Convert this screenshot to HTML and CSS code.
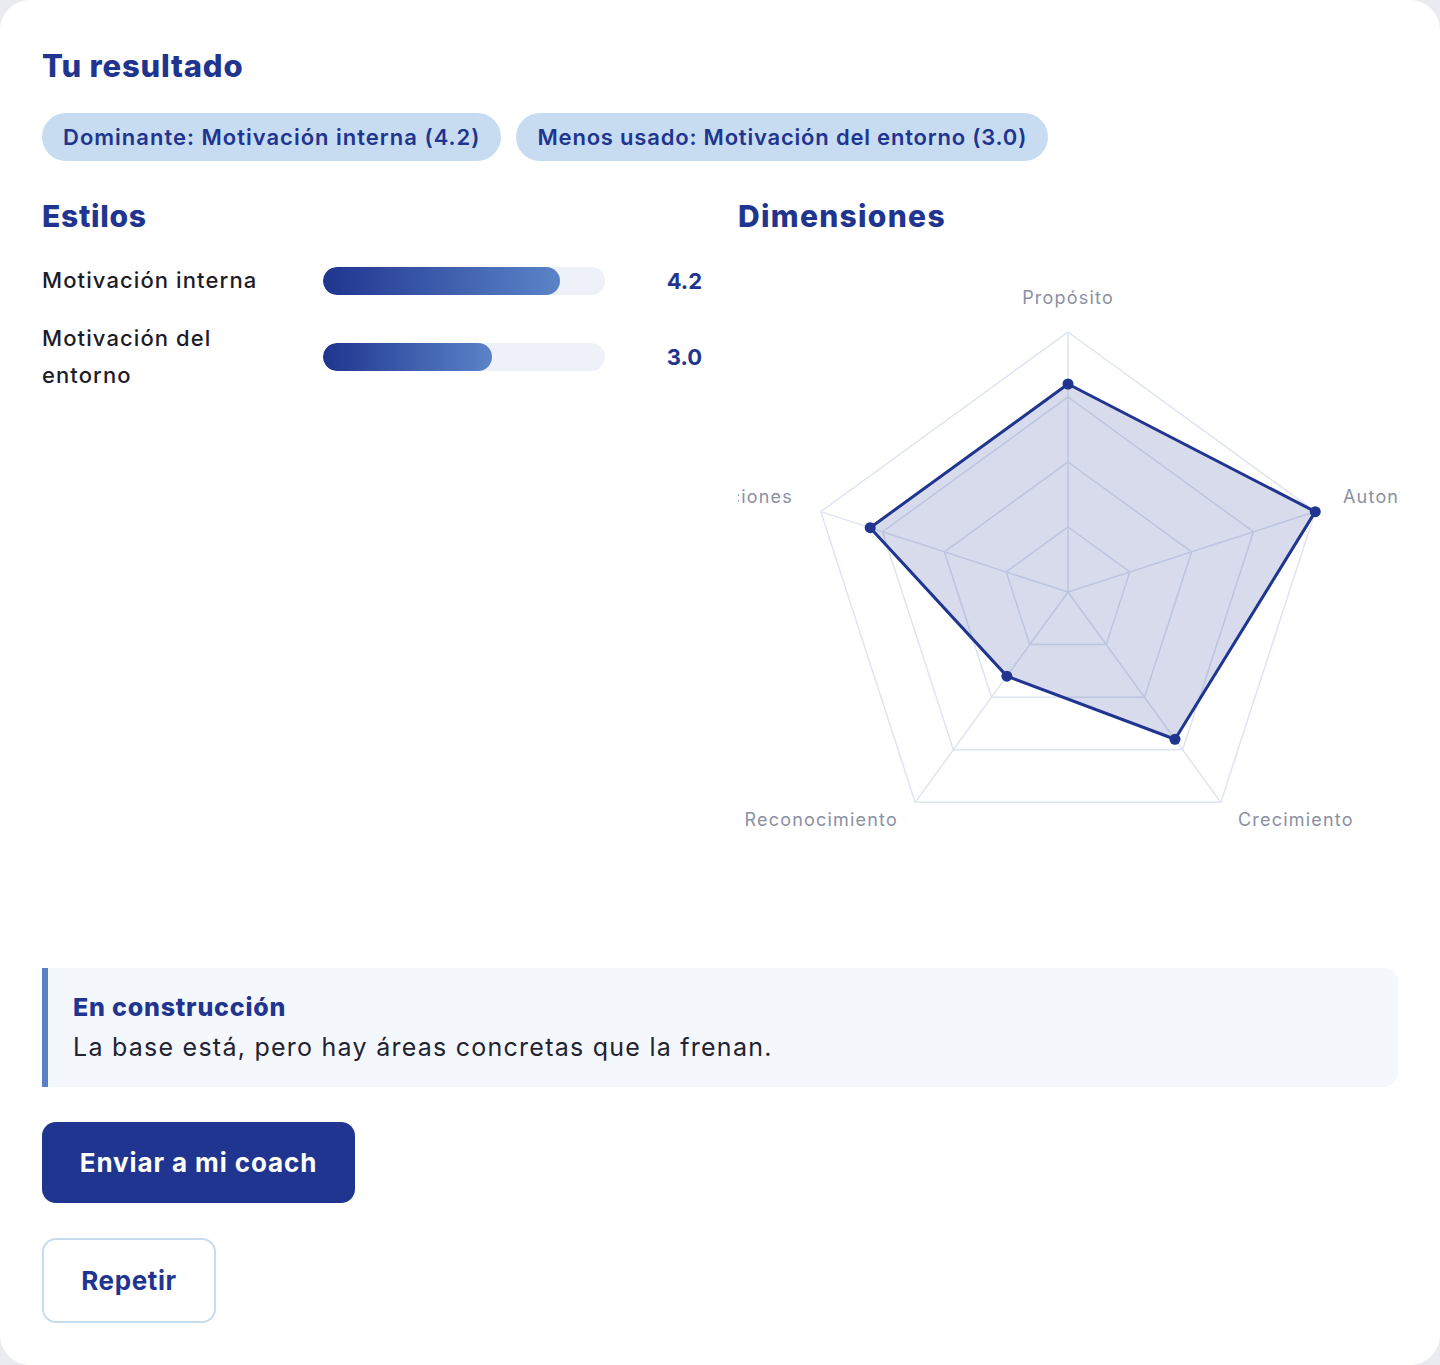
FILE: index.html
```html
<!DOCTYPE html>
<html lang="es">
<head>
<meta charset="utf-8">
<title>Tu resultado</title>
<link rel="stylesheet" href="styles.css">
</head>
<body>
<main class="card">
  <h1 class="title">Tu resultado</h1>
  <div class="pills">
    <span class="pill pill-dominant">Dominante: Motivación interna (4.2)</span>
    <span class="pill pill-least">Menos usado: Motivación del entorno (3.0)</span>
  </div>
  <div class="columns">
    <section class="col">
      <h2 class="heading">Estilos</h2>
      <div class="rows">
        <div class="row">
          <div class="row-label">Motivación interna</div>
          <div class="track"><div class="fill" style="width:84%"></div></div>
          <div class="row-value">4.2</div>
        </div>
        <div class="row">
          <div class="row-label">Motivación del entorno</div>
          <div class="track"><div class="fill" style="width:60%"></div></div>
          <div class="row-value">3.0</div>
        </div>
      </div>
    </section>
    <section class="col">
      <h2 class="heading heading-wide">Dimensiones</h2>
      <svg class="radar" width="660" height="680" viewBox="0 0 660 680">
        <g class="grid">
          <polygon points="330,80 577.27,259.66 482.82,550.34 177.18,550.34 82.73,259.66"/>
          <polygon points="330,145 515.46,279.74 444.62,497.76 215.38,497.76 144.54,279.74"/>
          <polygon points="330,210 453.64,299.83 406.41,445.17 253.59,445.17 206.36,299.83"/>
          <polygon points="330,275 391.82,319.91 368.21,392.59 291.79,392.59 268.18,319.91"/>
          <line x1="330" y1="340" x2="330" y2="80"/>
          <line x1="330" y1="340" x2="577.27" y2="259.66"/>
          <line x1="330" y1="340" x2="482.82" y2="550.34"/>
          <line x1="330" y1="340" x2="177.18" y2="550.34"/>
          <line x1="330" y1="340" x2="82.73" y2="259.66"/>
        </g>
        <polygon class="area" points="330,132 577.27,259.66 436.98,487.24 268.87,424.14 132.18,275.72"/>
        <g class="dots">
          <circle cx="330" cy="132" r="5.5"/>
          <circle cx="577.27" cy="259.66" r="5.5"/>
          <circle cx="436.98" cy="487.24" r="5.5"/>
          <circle cx="268.87" cy="424.14" r="5.5"/>
          <circle cx="132.18" cy="275.72" r="5.5"/>
        </g>
        <g class="axis-labels">
          <text x="330" y="45" text-anchor="middle">Propósito</text>
          <text x="605" y="244" text-anchor="start">Autonomía</text>
          <text x="500" y="567" text-anchor="start">Crecimiento</text>
          <text x="160" y="567" text-anchor="end">Reconocimiento</text>
          <text x="55" y="244" text-anchor="end">Relaciones</text>
        </g>
      </svg>
    </section>
  </div>
  <div class="callout">
    <div class="callout-title">En construcción</div>
    <div class="callout-text">La base está, pero hay áreas concretas que la frenan.</div>
  </div>
  <div class="actions">
    <button class="btn btn-primary" type="button">Enviar a mi coach</button>
    <button class="btn btn-secondary" type="button">Repetir</button>
  </div>
</main>
</body>
</html>
```

FILE: styles.css
```css
* { box-sizing: border-box; }

html, body {
  margin: 0;
  padding: 0;
}

body {
  background: #e9ebf0;
  font-family: "Inter", "Noto Sans", sans-serif;
  color: #1c1c28;
}

.card {
  background: #ffffff;
  border-radius: 30px;
  min-height: 1365px;
  width: 1440px;
  padding: 42px 42px 42px;
  display: flex;
  flex-direction: column;
}

.title {
  margin: 0;
  font-size: 31px;
  line-height: 48px;
  font-weight: 800;
  color: #1f358f;
  letter-spacing: 0.8px;
}

.pills {
  margin-top: 23px;
  display: flex;
  gap: 15px;
}

.pill {
  display: inline-block;
  background: #c7dcf1;
  color: #1f358f;
  font-size: 22px;
  line-height: 28px;
  font-weight: 600;
  letter-spacing: 0.9px;
  padding: 10px 21px;
  border-radius: 24px;
}

.pill-dominant {
  letter-spacing: 1px;
}

.pill-least {
  letter-spacing: 0.8px;
}

.columns {
  margin-top: 35px;
  display: grid;
  grid-template-columns: 660px 660px;
  column-gap: 36px;
}

.heading {
  margin: 0;
  font-size: 30px;
  line-height: 40px;
  font-weight: 800;
  color: #1f358f;
  letter-spacing: 0.7px;
}

.heading-wide {
  letter-spacing: 1.3px;
}

.rows {
  margin-top: 26px;
  display: flex;
  flex-direction: column;
  gap: 21px;
}

.row {
  display: grid;
  grid-template-columns: 259px 282px 1fr;
  column-gap: 22px;
  align-items: center;
}

.row-label {
  font-size: 22px;
  line-height: 37px;
  font-weight: 500;
  letter-spacing: 1.1px;
  color: #1c1c28;
}

.track {
  height: 28px;
  background: #eef1f7;
  border-radius: 14px;
  overflow: hidden;
}

.fill {
  height: 100%;
  border-radius: 14px;
  background: linear-gradient(90deg, #1f358f 0%, #5b84c8 100%);
}

.row-value {
  text-align: right;
  font-size: 22px;
  font-weight: 700;
  color: #1f358f;
}

.radar {
  display: block;
  margin-top: 16px;
}

.grid polygon,
.grid line {
  fill: none;
  stroke: #dfe4f1;
  stroke-width: 1.5;
}

.area {
  fill: #1f358f;
  fill-opacity: 0.18;
  stroke: #1f358f;
  stroke-width: 3;
  stroke-linejoin: round;
}

.dots circle {
  fill: #1f358f;
}

.axis-labels text {
  font-family: "Inter", "Noto Sans", sans-serif;
  font-size: 18px;
  letter-spacing: 1.2px;
  fill: #8b90a2;
  dominant-baseline: central;
}

.callout {
  margin-top: 36px;
  background: #f4f8fd;
  border-left: 6px solid #5a80c4;
  border-radius: 0 14px 14px 0;
  padding: 20px 24px 19px 25px;
}

.callout-title {
  font-size: 25px;
  line-height: 38px;
  font-weight: 800;
  color: #1f358f;
  letter-spacing: 0.8px;
}

.callout-text {
  font-size: 25px;
  line-height: 42px;
  font-weight: 400;
  letter-spacing: 1.25px;
  color: #222230;
}

.actions {
  margin-top: 35px;
  display: flex;
  flex-direction: column;
  align-items: flex-start;
  gap: 35px;
}

.btn {
  font-family: "Inter", "Noto Sans", sans-serif;
  font-size: 26px;
  font-weight: 700;
  line-height: 33px;
  border-radius: 14px;
  cursor: pointer;
}

.btn-primary {
  background: #1f358f;
  color: #ffffff;
  border: none;
  padding: 24px 30px;
  width: 313px;
  letter-spacing: 0.9px;
}

.btn-secondary {
  background: #ffffff;
  color: #1f358f;
  border: 2px solid #c8dcef;
  padding: 24px 30px;
  width: 174px;
  letter-spacing: 0.6px;
}
```
